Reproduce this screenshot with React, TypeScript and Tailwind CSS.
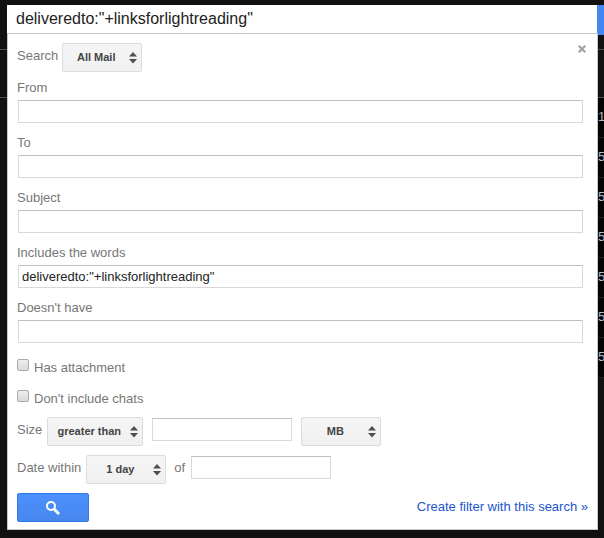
import { useId, useState } from 'react';
import clsx from 'clsx';

const textFields = [
  { name: 'from', label: 'From', value: '' },
  { name: 'to', label: 'To', value: '' },
  { name: 'subject', label: 'Subject', value: '' },
  { name: 'has', label: 'Includes the words', value: 'deliveredto:"+linksforlightreading"' },
  { name: 'hasnot', label: "Doesn't have", value: '' },
];

const messageDays = ['1', '5', '5', '5', '5', '5', '5'];

const inputStyle =
  'h-[23px] border border-[#d9d9d9] border-t-[#c0c0c0] bg-white px-[3px] text-[13px] text-[#222] outline-none focus:border-[#4d90fe]';

type SelectProps = {
  options: string[];
  label?: string;
  id?: string;
  className?: string;
};

function Select({ options, label, id, className }: SelectProps) {
  return (
    <div className={clsx('relative h-[29px]', className)}>
      <select
        id={id}
        aria-label={label}
        className="h-full w-full appearance-none rounded-xs border border-[#dcdcdc] bg-linear-to-b from-[#f5f5f5] to-[#f1f1f1] pr-3 text-center text-[11px] font-bold text-[#444] outline-none"
      >
        {options.map((option) => (
          <option key={option}>{option}</option>
        ))}
      </select>
      <svg
        viewBox="0 0 8 12"
        className="pointer-events-none absolute top-[9px] right-[5px] h-3 w-2 fill-[#4d4d55]"
        aria-hidden="true"
      >
        <path d="M4 0 8 4.5H0z" />
        <path d="M0 7H8L4 11.5z" />
      </svg>
    </div>
  );
}

function TextField({ name, label, value }: { name: string; label: string; value: string }) {
  const id = useId();
  const [text, setText] = useState(value);

  return (
    <div className="mb-[9px] flex flex-col">
      <label htmlFor={id} className="mb-px leading-[22px]">
        {label}
      </label>
      <input
        id={id}
        name={name}
        type="text"
        value={text}
        onChange={(e) => setText(e.target.value)}
        className={clsx(inputStyle, 'ml-px')}
      />
    </div>
  );
}

function Checkbox({ label }: { label: string }) {
  return (
    <label className="flex items-start gap-[5px] leading-5">
      <input
        type="checkbox"
        className="mt-px h-3 w-3 appearance-none rounded-xs border border-[#aaa] bg-linear-to-b from-[#eee] to-[#dadada] checked:bg-[#4d90fe]"
      />
      {label}
    </label>
  );
}

function LeftEdge() {
  return (
    <div className="w-[7px] shrink-0 pt-[49px]">
      <div className="h-[49px] border-y border-[#5c4848]" />
    </div>
  );
}

// 메일 목록의 오른쪽 끝부분
function MessageListEdge() {
  return (
    <div className="w-1.5 shrink-0 pt-[5px] text-[13px] text-[#b5b5c4]">
      <div className="-ml-px h-[30px] bg-[#4387f0]" />
      <div className="mt-3.5 h-[49px] border-y border-[#5c4848]" />
      {messageDays.map((day, i) => (
        <div key={i} className="h-10 overflow-hidden border-b border-[#241c1c] bg-[#040404] leading-[38px]">
          {day}
        </div>
      ))}
    </div>
  );
}

export default function App() {
  const [query, setQuery] = useState('deliveredto:"+linksforlightreading"');

  return (
    <div className="flex min-h-screen bg-[#111] font-['Liberation_Sans',Arial,sans-serif] text-[13px] text-[#777]">
      <LeftEdge />

      <main className="mt-[5px] min-w-0 flex-1 self-start bg-white">
        <input
          type="text"
          aria-label="Search mail"
          value={query}
          onChange={(e) => setQuery(e.target.value)}
          className="block h-7 w-full bg-white px-[9px] text-base text-[#222] outline-none"
        />

        <form
          onSubmit={(e) => e.preventDefault()}
          className="relative border border-[#c8c8c8] pt-[9px] pr-[14px] pb-[7px] pl-[9px]"
        >
          <button type="button" aria-label="Close" className="absolute top-[11px] right-[11px] h-2 w-2">
            <svg viewBox="0 0 8 8" className="h-2 w-2 stroke-[#a5a1a3]" aria-hidden="true">
              <path d="M0.7 0.7 7.3 7.3M7.3 0.7 0.7 7.3" strokeWidth="2.2" />
            </svg>
          </button>

          <div className="mb-[5px] flex items-start gap-1">
            <label htmlFor="scope" className="leading-[25px]">
              Search
            </label>
            <Select id="scope" options={['All Mail', 'Inbox', 'Starred']} className="w-20" />
          </div>

          {textFields.map((field) => (
            <TextField key={field.name} {...field} />
          ))}

          <div className="mt-[15px] mb-2 flex flex-col items-start gap-[11px]">
            <Checkbox label="Has attachment" />
            <Checkbox label="Don't include chats" />
          </div>

          <div className="mb-[9px] flex items-start">
            <label htmlFor="size" className="mr-[5px] leading-[25px]">
              Size
            </label>
            <Select label="Size comparison" options={['greater than', 'less than']} className="w-24" />
            <input id="size" type="text" className={clsx(inputStyle, 'mt-px mr-[9px] ml-[9px] w-[140px]')} />
            <Select label="Size unit" options={['MB', 'KB', 'Bytes']} className="w-20" />
          </div>

          <div className="mb-[9px] flex items-start">
            <label htmlFor="within" className="mr-[5px] leading-[25px]">
              Date within
            </label>
            <Select id="within" options={['1 day', '3 days', '1 week']} className="w-20" />
            <label htmlFor="date" className="mr-1.5 ml-2 leading-[25px]">
              of
            </label>
            <input id="date" type="text" className={clsx(inputStyle, 'mt-px w-[140px]')} />
          </div>

          <div className="flex items-start justify-between">
            <button
              type="submit"
              aria-label="Search"
              className="flex h-[29px] w-[72px] items-center justify-center rounded-xs border border-[#3079ed] bg-linear-to-b from-[#4d90fe] to-[#4787ed]"
            >
              <svg viewBox="0 0 14 14" className="mt-px h-3.5 w-3.5 fill-none stroke-white" aria-hidden="true">
                <circle cx="5" cy="5" r="4" strokeWidth="2" />
                <path d="M8 8 13 13" strokeWidth="2.8" />
              </svg>
            </button>
            <a href="#" className="-mr-[5px] leading-[27px] text-[#25c]">
              Create filter with this search »
            </a>
          </div>
        </form>
      </main>

      <MessageListEdge />
    </div>
  );
}
